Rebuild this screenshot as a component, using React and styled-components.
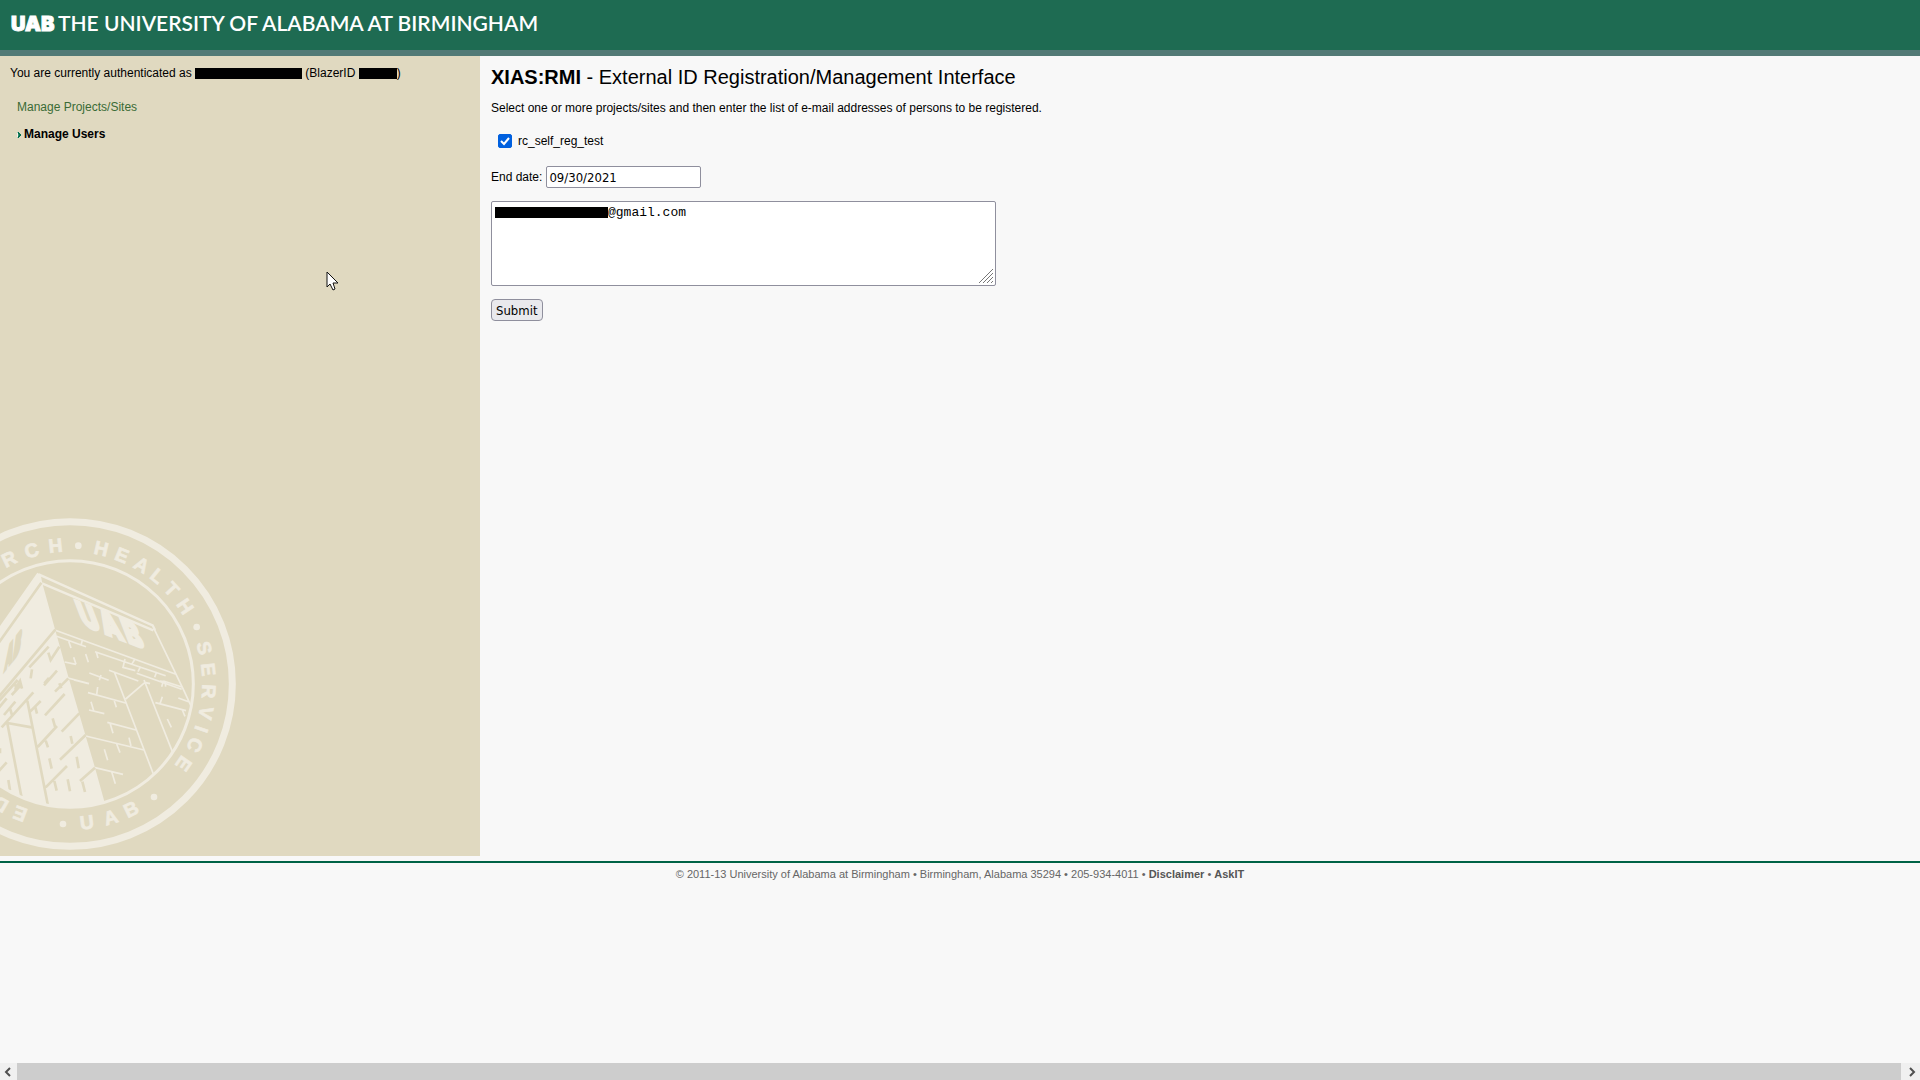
import { useState } from 'react';
import styled, { createGlobalStyle } from 'styled-components';

const navItems = [
	{ name: 'Manage Projects/Sites', active: false },
	{ name: 'Manage Users', active: true },
];

const sites = [{ id: 'rc_self_reg_test', checked: true }];

// letters round the rim: [character, degrees clockwise from the top]
const rimLetters = [
	['A', -35],
	['R', -26],
	['C', -16],
	['H', -6],
	['H', 13],
	['E', 22],
	['A', 31],
	['L', 39],
	['T', 47],
	['H', 56],
	['S', 75],
	['E', 84],
	['R', 93],
	['V', 102],
	['I', 109],
	['C', 116],
	['E', 125],
	['E', 201],
	['D', 210],
];

// these read upright along the bottom of the rim
const footLetters = [
	['U', -7],
	['A', -17],
	['B', -26],
];

const rimDots = [
	[235, 137],
	[590, 381],
	[462, 891],
	[189, 972],
];

const Seal = () => {
	return (
		<SealSvg viewBox="0 0 720 1068" aria-hidden="true">
			<defs>
				<clipPath id="seal-inner">
					<circle cx="210" cy="552" r="370" />
				</clipPath>
			</defs>

			<g clipPath="url(#seal-inner)">
				<path
					className="fill"
					d="M112 218 L122 224 L127 250 L165 388 L205 530 L257 708 L285 803 L316 915 L210 930 L-10 930 L-10 392 Z"
				/>
				{/* roof and right hand wall */}
				<path className="line roof" d="M116 223 L458 376 L465 390 M126 250 L460 391" />
				<path
					className="line"
					d="M462 386 L550 568 L575 622 M166 391 L528 523 M170 409 L258 440 M247 421 L243 436
					M206 424 L213 444 M194 486 L228 493 M221 472 L228 493 M204 534 L267 551 M257 462 L265 487
					M285 455 L497 527 M289 457 L294 474 M375 477 L369 502 L406 512 M405 477 L395 493 M414 515 L422 499
					M470 515 L464 532 M268 519 L326 541 M303 525 L298 541 M327 511 L415 543 M410 520 L545 568
					M343 516 L460 822 M377 597 L435 547 L450 551 M432 540 L518 757 M480 543 L495 545 L497 560
					M222 540 L266 551 M264 578 L377 609 M293 561 L290 584 M343 603 L349 622 M267 630 L313 641
					M273 605 L281 632 M322 667 L408 690 M330 669 L339 700 M257 708 L432 750 M313 748 L323 781
					M350 732 L360 758 M387 713 L393 738 M285 803 L369 823 M335 815 L346 851 M466 608 L558 632
					M487 590 L480 611 M547 630 L555 649 M502 657 L514 682 M490 543 L546 561 M535 594 L570 607 M490 543 L485 560"
				/>
				{/* joints cut out of the lit wall */}
				<path
					className="cut"
					d="M124 248 L-10 437 M166 389 L-10 598 M88 502 L146 440 M96 508 L92 535 M132 556 L171 512
					M145 458 L152 480 L178 440 M45 570 L60 543 L66 566 M20 135 L-5 165
					M22 670 L64 889 M22 669 L95 682 M82 602 L143 912 M5 682 L100 577 M113 741 L171 678 M158 655 L165 680
					M135 646 L194 582 M185 695 L238 640 M180 779 L257 705 M212 708 L217 731 M137 722 L144 742
					M230 770 L236 805 M148 775 L155 806 M137 862 L201 798 M163 843 L170 872 M203 838 L210 874
					M240 843 L285 803 M247 845 L255 876 M25 840 L30 871 M-5 815 L20 787 M0 745 L0 760
					M88 637 L122 603 M105 618 L111 641 M165 575 L205 535 M178 550 L184 565 M133 550 L147 534
					M-5 605 L53 540 M35 585 L62 556 M-5 625 L20 595 M12 645 L46 605 M30 625 L36 645 M45 552 L50 570"
				/>
				<g transform="translate(250 376) rotate(21) skewX(42)">
					<text className="mark" x="0" y="0">U</text>
					<text className="mark" x="70" y="0">A</text>
					<text className="mark" x="144" y="0">B</text>
				</g>
				<g transform="translate(38 481) rotate(-52) skewX(-60)">
					<text className="mark shade" x="-42" y="0">A</text>
					<text className="mark shade" x="0" y="0">B</text>
				</g>
			</g>

			<circle className="ring" cx="210" cy="552" r="487" strokeWidth="21" />
			<circle className="ring" cx="210" cy="552" r="370" strokeWidth="9" />

			{rimLetters.map(([letter, angle], index) => (
				<text key={index} className="rim" x="210" y="155" transform={`rotate(${angle} 210 552)`}>
					{letter}
				</text>
			))}
			{footLetters.map(([letter, angle], index) => (
				<text key={index} className="rim" x="210" y="990" transform={`rotate(${angle} 210 552)`}>
					{letter}
				</text>
			))}
			{rimDots.map(([x, y], index) => (
				<circle key={index} className="fill" cx={x} cy={y} r="10" />
			))}
		</SealSvg>
	);
};

const Chevron = ({ flip }) => (
	<svg width="7" height="10" viewBox="0 0 7 10" aria-hidden="true">
		<path
			d={flip ? 'M1 1 L5 5 L1 9' : 'M6 1 L2 5 L6 9'}
			fill="none"
			stroke="#505050"
			strokeWidth="2"
		/>
	</svg>
);

const App = () => {
	const [checked, setChecked] = useState(sites.map((site) => site.checked));
	const [endDate, setEndDate] = useState('09/30/2021');
	const [emails, setEmails] = useState('@gmail.com');

	const toggle = (index) => {
		setChecked(checked.map((value, i) => (i === index ? !value : value)));
	};

	return (
		<Page>
			<GlobalStyle />
			<Header>
				<Logo viewBox="0 0 48 26" role="img" aria-label="UAB">
					<text x="2" y="20">U</text>
					<text x="16" y="20">A</text>
					<text x="32" y="20">B</text>
				</Logo>
				<span>THE UNIVERSITY OF ALABAMA AT BIRMINGHAM</span>
			</Header>

			<Content>
				<Sidebar>
					<p>
						You are currently authenticated as <Redacted $width={107} /> (BlazerID{' '}
						<Redacted $width={38} />)
					</p>
					<Nav>
						{navItems.map(({ name, active }) => (
							<NavLink href="#" key={name} $active={active}>
								{active && (
									<svg width="5" height="7" viewBox="0 0 5 7" aria-hidden="true">
										<path d="M0 1 H1 V7 H0 Z" fill="#f4f1e8" />
										<path d="M1 1 L4 4 L1 7 L2 4 Z" fill="#00704f" stroke="#00704f" />
									</svg>
								)}
								{name}
							</NavLink>
						))}
					</Nav>
					<Seal />
					<Pointer viewBox="0 0 13 20" aria-hidden="true">
						<path
							d="M1 1 V16 L4 13 L7 19 L9 18 L7 12 H12 Z"
							fill="#fff"
							stroke="#111"
							strokeWidth="1"
						/>
					</Pointer>
				</Sidebar>

				<Main>
					<h1>
						<strong>XIAS:RMI</strong> - External ID Registration/Management Interface
					</h1>
					<p>
						Select one or more projects/sites and then enter the list of e-mail addresses of persons
						to be registered.
					</p>
					<form onSubmit={(e) => e.preventDefault()}>
						{sites.map(({ id }, index) => (
							<CheckRow key={id} htmlFor={id}>
								<CheckBox>
									<input
										type="checkbox"
										id={id}
										checked={checked[index]}
										onChange={() => toggle(index)}
									/>
									<svg viewBox="0 0 14 14" aria-hidden="true">
										<path d="M3 7 L6 10 L11 4" fill="none" stroke="#fff" strokeWidth="2" />
									</svg>
								</CheckBox>
								{id}
							</CheckRow>
						))}
						<DateRow>
							<label htmlFor="end-date">End date:</label>
							<DateInput
								type="text"
								id="end-date"
								value={endDate}
								onChange={(e) => setEndDate(e.target.value)}
							/>
						</DateRow>
						<EmailBox>
							<textarea
								aria-label="E-mail addresses"
								spellCheck="false"
								value={emails}
								onChange={(e) => setEmails(e.target.value)}
							/>
							<Mask />
							<svg className="grip" viewBox="0 0 14 14" aria-hidden="true">
								<path d="M0 14 L14 0 M4 14 L14 4 M8 14 L14 8 M12 14 L14 12" stroke="#777" />
							</svg>
						</EmailBox>
						<Submit type="submit">Submit</Submit>
					</form>
				</Main>
			</Content>

			<Footer>
				© 2011-13 University of Alabama at Birmingham • Birmingham, Alabama 35294 • 205-934-4011 •{' '}
				<a href="#">Disclaimer</a> • <a href="#">AskIT</a>
			</Footer>

			<ScrollBar>
				<button type="button" aria-label="Scroll left">
					<Chevron />
				</button>
				<div className="thumb" />
				<button type="button" aria-label="Scroll right">
					<Chevron flip />
				</button>
			</ScrollBar>
		</Page>
	);
};

const GlobalStyle = createGlobalStyle`
	* {
		box-sizing: border-box;
	}

	body {
		margin: 0;
		background: #f8f8f8;
		color: #000;
		font-family: 'Liberation Sans', Arial, sans-serif;
		font-size: 12px;
		line-height: 16px;
	}

	h1,
	p {
		margin: 0;
	}
`;

const Page = styled.div`
	min-height: 100vh;
	display: flex;
	flex-direction: column;
`;

const Header = styled.header`
	display: flex;
	align-items: flex-start;
	gap: 1px;
	height: 56px;
	padding: 11px 9px 0;
	background: #1e6b52;
	border-bottom: 6px solid #527a76;
	color: #fff;
	font-family: Lato, sans-serif;
	font-size: 21px;
	font-weight: 600;
	line-height: 24px;
	white-space: nowrap;
`;

const Logo = styled.svg`
	flex: none;
	width: 48px;
	height: 26px;

	text {
		fill: #fff;
		stroke: #fff;
		font-family: Inter, sans-serif;
		font-size: 20px;
		font-weight: 900;
	}
`;

const Content = styled.div`
	display: flex;
	min-height: 800px;
`;

const Sidebar = styled.aside`
	position: relative;
	display: flex;
	flex-direction: column;
	width: 25%;
	padding-top: 9px;
	background: #e0d9c0;

	p {
		padding: 0 10px;
	}
`;

const Redacted = styled.span`
	display: inline-block;
	width: ${({ $width }) => $width}px;
	height: 11px;
	background: #000;
	vertical-align: -2px;
`;

const Nav = styled.nav`
	display: flex;
	flex-direction: column;
	align-items: flex-start;
	gap: 11px;
	padding: 18px 17px 0;
`;

const NavLink = styled.a`
	display: flex;
	align-items: center;
	gap: 2px;
	color: ${({ $active }) => ($active ? '#000' : '#3a6b35')};
	font-weight: ${({ $active }) => ($active ? 700 : 400)};
	text-decoration: none;
`;

const SealSvg = styled.svg`
	width: 240px;
	height: 356px;
	margin-top: auto;

	.fill {
		fill: #f0ece0;
	}

	.line {
		fill: none;
		stroke: #f0ece0;
		stroke-width: 5;
	}

	.roof {
		stroke-width: 7;
	}

	.cut {
		fill: none;
		stroke: #e0d9c0;
		stroke-width: 8;
	}

	.ring {
		fill: none;
		stroke: #f0ece0;
	}

	.rim {
		fill: #f0ece0;
		stroke: #f0ece0;
		stroke-width: 2;
		font-size: 58px;
		font-weight: 700;
		text-anchor: middle;
	}

	.mark {
		fill: #f0ece0;
		stroke: #f0ece0;
		stroke-width: 7;
		font-family: Inter, sans-serif;
		font-size: 84px;
		font-weight: 900;
	}

	.shade {
		fill: #e0d9c0;
		stroke: #e0d9c0;
		font-size: 48px;
	}
`;

const Pointer = styled.svg`
	position: absolute;
	top: 215px;
	left: 326px;
	width: 13px;
	height: 20px;
`;

const Main = styled.main`
	flex: 1;
	padding: 9px 11px;

	h1 {
		margin-bottom: 11px;
		font-size: 20px;
		font-weight: 400;
		line-height: 24px;
	}

	form {
		display: flex;
		flex-direction: column;
		align-items: flex-start;
		gap: 13px;
		padding-top: 17px;
	}
`;

const CheckRow = styled.label`
	display: flex;
	align-items: center;
	gap: 6px;
	margin-bottom: 4px;
	padding-left: 7px;
`;

const CheckBox = styled.span`
	display: grid;

	input,
	svg {
		grid-area: 1 / 1;
		width: 14px;
		height: 14px;
		margin: 0;
	}

	input {
		appearance: none;
		background: #fff;
		border: 1px solid #8f8f9d;
		border-radius: 2px;
	}

	input:checked {
		background: #0060df;
		border-color: #0060df;
	}

	svg {
		pointer-events: none;
	}
`;

const DateRow = styled.div`
	display: flex;
	align-items: center;
	gap: 4px;
`;

const DateInput = styled.input`
	width: 155px;
	height: 22px;
	padding: 1px 2px;
	border: 1px solid #8f8f9d;
	border-radius: 2px;
	background: #fff;
	font-family: 'DejaVu Sans Condensed', 'DejaVu Sans', sans-serif;
	font-size: 13px;
`;

const EmailBox = styled.div`
	position: relative;
	width: 505px;
	max-width: 100%;

	textarea {
		display: block;
		width: 100%;
		height: 85px;
		padding: 3px;
		border: 1px solid #8f8f9d;
		border-radius: 2px;
		background: #fff;
		font-family: 'Liberation Mono', 'Courier New', monospace;
		font-size: 13px;
		line-height: 16px;
		text-indent: 113px;
		resize: none;
	}

	.grip {
		position: absolute;
		right: 3px;
		bottom: 3px;
		width: 14px;
		height: 14px;
		pointer-events: none;
	}
`;

const Mask = styled.span`
	position: absolute;
	top: 6px;
	left: 4px;
	width: 113px;
	height: 11px;
	background: #000;
`;

const Submit = styled.button`
	height: 22px;
	padding: 0 4px;
	border: 1px solid #8f8f9d;
	border-radius: 4px;
	background: #e9e9ed;
	color: #000;
	font-family: 'DejaVu Sans Condensed', 'DejaVu Sans', sans-serif;
	font-size: 13px;
`;

const Footer = styled.footer`
	margin-top: 5px;
	padding-top: 5px;
	border-top: 2px solid #006346;
	color: #666;
	font-size: 11px;
	line-height: 12px;
	text-align: center;

	a {
		color: #555;
		font-weight: 700;
		text-decoration: none;
	}
`;

const ScrollBar = styled.div`
	display: flex;
	height: 17px;
	margin-top: auto;

	button {
		display: grid;
		place-items: center;
		width: 17px;
		padding: 0 2px 0 0;
		border: 0;
		background: #f0f0f0;
	}

	button:last-child {
		width: 19px;
		padding: 0 0 0 3px;
	}

	.thumb {
		flex: 1;
		background: #cdcdcd;
	}
`;

export default App;
